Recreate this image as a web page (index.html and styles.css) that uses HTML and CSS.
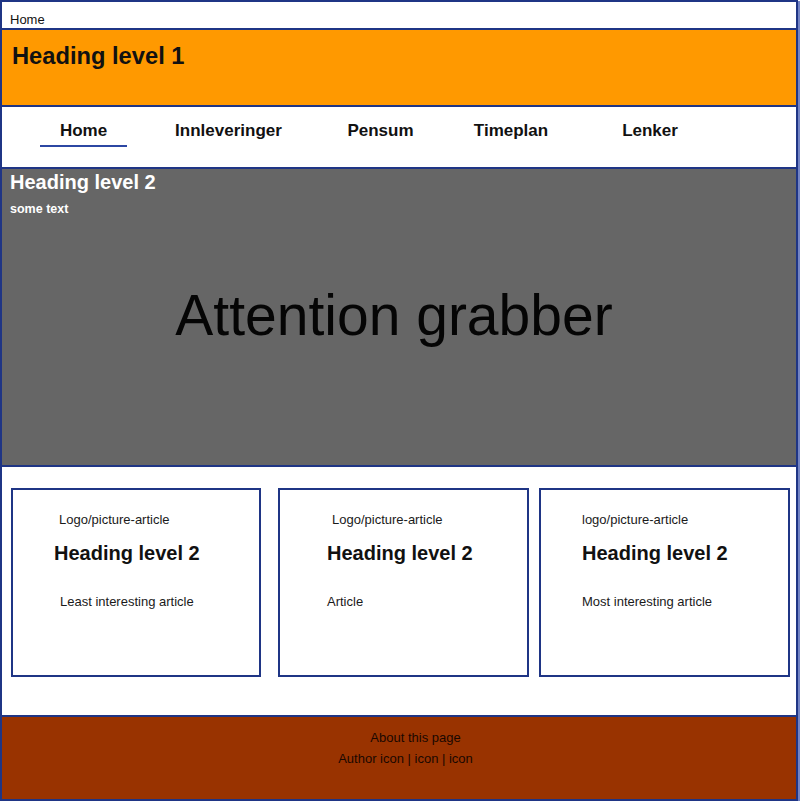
FILE: index.html
```html
<!DOCTYPE html>
<html lang="no">
<head>
<meta charset="utf-8">
<title>Home</title>
<link rel="stylesheet" href="styles.css">
</head>
<body>
<div class="page">
  <div class="topbar">Home</div>
  <header class="header">
    <h1 class="header__title">Heading level 1</h1>
  </header>
  <nav class="nav">
    <a class="nav__item nav__item--home nav__item--active">Home</a>
    <a class="nav__item nav__item--innl">Innleveringer</a>
    <a class="nav__item nav__item--pensum">Pensum</a>
    <a class="nav__item nav__item--time">Timeplan</a>
    <a class="nav__item nav__item--lenker">Lenker</a>
  </nav>
  <section class="hero">
    <h2 class="hero__title">Heading level 2</h2>
    <p class="hero__text">some text</p>
    <p class="hero__grabber">Attention grabber</p>
  </section>
  <main class="cards">
    <article class="card card--one">
      <p class="card__logo">Logo/picture-article</p>
      <h2 class="card__title">Heading level 2</h2>
      <p class="card__text">Least interesting article</p>
    </article>
    <article class="card card--two">
      <p class="card__logo">Logo/picture-article</p>
      <h2 class="card__title">Heading level 2</h2>
      <p class="card__text">Article</p>
    </article>
    <article class="card card--three">
      <p class="card__logo">logo/picture-article</p>
      <h2 class="card__title">Heading level 2</h2>
      <p class="card__text">Most interesting article</p>
    </article>
  </main>
  <footer class="footer">
    <p class="footer__about">About this page</p>
    <p class="footer__author">Author icon | icon | icon</p>
  </footer>
</div>
</body>
</html>
```

FILE: styles.css
```css
* {
  box-sizing: border-box;
}

html, body {
  margin: 0;
  padding: 0;
  background: #ffffff;
}

body {
  font-family: "Liberation Sans", Arial, sans-serif;
  color: #111111;
}

.page {
  width: 798px;
  border: 2px solid #1f3585;
  box-shadow: 2px 1px 0 #7384c4;
}

.topbar {
  height: 28px;
  padding: 10px 0 0 8px;
  font-size: 13px;
  line-height: 15px;
  border-bottom: 2px solid #1f3585;
}

.header {
  height: 77px;
  background: #ff9900;
  border-bottom: 2px solid #1f3585;
  padding: 13px 0 0 10px;
}

.header__title {
  margin: 0;
  font-size: 23.7px;
  font-weight: bold;
  line-height: 27px;
  color: #111111;
}

.nav {
  height: 62px;
  border-bottom: 2px solid #1f3585;
  display: flex;
  align-items: flex-start;
  padding: 14px 0 0 38px;
}

.nav__item {
  display: block;
  text-align: center;
  font-size: 17px;
  font-weight: bold;
  line-height: 19px;
  padding-bottom: 5px;
  border-bottom: 2px solid transparent;
  color: #111111;
}

.nav__item--active {
  border-bottom-color: #2c47a3;
}

.nav__item--home { width: 87px; }
.nav__item--innl { width: 203px; }
.nav__item--pensum { width: 101px; }
.nav__item--time { width: 160px; }
.nav__item--lenker { width: 118px; }

.hero {
  height: 298px;
  background: #666666;
  border-bottom: 2px solid #1f3585;
  padding: 2px 0 0 8px;
}

.hero__title {
  margin: 0;
  font-size: 20px;
  font-weight: bold;
  line-height: 23px;
  color: #ffffff;
}

.hero__text {
  margin: 8px 0 0;
  font-size: 12.5px;
  font-weight: bold;
  line-height: 14px;
  color: #ffffff;
}

.hero__grabber {
  margin: 67px 0 0;
  padding-right: 18px;
  text-align: center;
  font-size: 57px;
  line-height: 65px;
  color: #050505;
}

.cards {
  height: 250px;
  border-bottom: 2px solid #1f3585;
  display: flex;
  align-items: flex-start;
  padding: 21px 6px 0 9px;
  gap: 10px;
}

.card {
  width: 250px;
  height: 189px;
  border: 2px solid #1f3585;
  padding: 22px 0 0 41px;
}

.card--two {
  width: 251px;
  margin-left: 7px;
}

.card--three {
  width: 251px;
}

.card__logo {
  margin: 0;
  font-size: 13px;
  line-height: 15px;
  color: #1a1a1a;
}

.card__title {
  margin: 15px 0 0;
  font-size: 20px;
  font-weight: bold;
  line-height: 23px;
  color: #111111;
}

.card__text {
  margin: 28.5px 0 0;
  font-size: 13px;
  line-height: 15px;
  color: #1a1a1a;
}

.card--one .card__logo { margin-left: 5px; }
.card--one .card__text { margin-left: 6px; }
.card--two .card__logo { margin-left: 11px; }
.card--two .card__title { margin-left: 6px; }
.card--two .card__text { margin-left: 6px; }

.footer {
  height: 82px;
  background: #993300;
  padding-top: 10px;
  text-align: center;
  font-size: 13px;
  line-height: 21px;
  color: #1a0800;
}

.footer__about {
  margin: 0;
  padding-left: 33px;
}

.footer__author {
  margin: 0;
  padding-left: 13px;
}
```
